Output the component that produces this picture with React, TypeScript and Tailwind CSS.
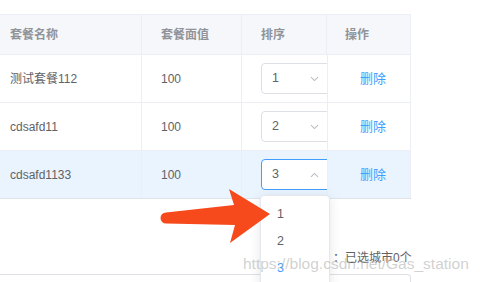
import React from "react"

type Row = { name: string; price: string; sort: string; active?: boolean }

const rows: Row[] = [
  { name: "测试套餐112", price: "100", sort: "1" },
  { name: "cdsafd11", price: "100", sort: "2" },
  { name: "cdsafd1133", price: "100", sort: "3", active: true },
]

const font = { fontFamily: '"Liberation Sans", "Noto Sans CJK SC", sans-serif' }

function Chevron({ up }: { up?: boolean }) {
  return (
    <svg width="9" height="6" viewBox="0 0 9 6" className={up ? "rotate-180" : ""}>
      <path d="M1 1.2 L4.5 4.6 L8 1.2" fill="none" stroke="#b8bcc4" strokeWidth="1.1" />
    </svg>
  )
}

function SortSelect({ value, open }: { value: string; open?: boolean }) {
  return (
    <div
      className={`flex h-[31px] w-[70px] shrink-0 items-center justify-between rounded-[4px] border bg-white pl-[10px] pr-[11px] text-[12.5px] text-[#606266] ${
        open ? "border-[#409eff]" : "border-[#dcdfe6]"
      }`}
    >
      <span>{value}</span>
      <Chevron up={open} />
    </div>
  )
}

export default function App() {
  return (
    <div className="relative h-[282px] w-[480px] overflow-hidden bg-white" style={font}>
      {/* table */}
      <div className="pt-[14px]">
        <div className="w-[411px] border-t border-[#ebeef5]">
          <div className="grid h-[40px] grid-cols-[142px_100px_85px_84px] border-b border-[#ebeef5] bg-[#f5f7fa] text-[12px] font-semibold text-[#909399]">
            <div className="flex items-center border-r border-[#ebeef5] pl-[10px]">套餐名称</div>
            <div className="flex items-center border-r border-[#ebeef5] pl-[19px]">套餐面值</div>
            <div className="flex items-center border-r border-[#ebeef5] pl-[19px]">排序</div>
            <div className="flex items-center border-r border-[#ebeef5] pl-[18px]">操作</div>
          </div>
          {rows.map((r) => (
            <div
              key={r.name}
              className={`grid h-[48px] grid-cols-[142px_100px_85px_84px] border-b text-[12px] text-[#606266] ${
                r.active ? "border-[#dfe3ea] bg-[#eaf4fe]" : "border-[#ebeef5] bg-white"
              }`}
            >
              <div className="flex items-center border-r border-[#ebeef5] pl-[10px]">{r.name}</div>
              <div className="flex items-center border-r border-[#ebeef5] pl-[19px]">{r.price}</div>
              <div className="flex items-center overflow-hidden pl-[19px]">
                <SortSelect value={r.sort} open={r.active} />
              </div>
              <div className="flex items-center border-x border-[#ebeef5] pl-[32px] text-[13px] text-[#409eff]">删除</div>
            </div>
          ))}
        </div>
      </div>

      {/* below table */}
      <div className="pt-[51px]">
        <div className="h-[16px] pl-[333px] text-[12px] leading-[16px] text-[#606266]">：已选城市0个</div>
        <div className="mt-[8px] h-[20px] w-[411px] rounded-tr-[4px] border-t border-r border-[#dcdfe6]" />
      </div>

      {/* dropdown */}
      <div className="absolute left-[260px] top-[195px] h-[100px] w-[70px] rounded-[4px] border border-[#e4e7ed] bg-white pt-[5px] text-[12.5px] shadow-[0_2px_12px_rgba(0,0,0,0.1)]">
        <div className="flex h-[27px] items-center pl-[16px] text-[#606266]">1</div>
        <div className="flex h-[27px] items-center pl-[16px] text-[#606266]">2</div>
        <div className="flex h-[27px] items-center pl-[16px] text-[#409eff]">3</div>
      </div>

      {/* annotation arrow */}
      <svg className="pointer-events-none absolute left-0 top-0" width="480" height="282">
        <path
          d="M166 212.5 L234 205 L229 189 L270 214 L230 243 L235 225 L166 223.5 A5.5 5.5 0 0 1 166 212.5 Z"
          fill="#f64a1c"
        />
      </svg>

      {/* watermark */}
      <div className="pointer-events-none absolute left-[243px] top-[255px] text-[15.5px] leading-[18px] text-[rgba(170,170,170,0.55)]">
        https://blog.csdn.net/Gas_station
      </div>
    </div>
  )
}
